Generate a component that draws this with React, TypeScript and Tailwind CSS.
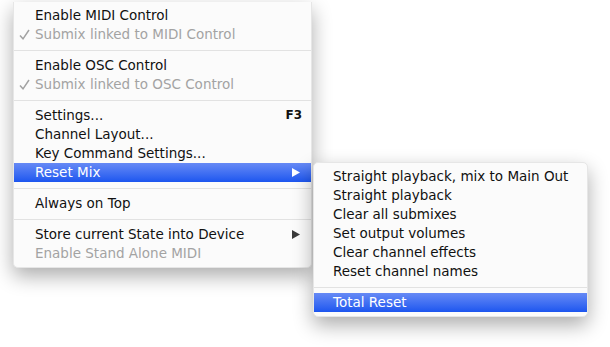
import React from 'react';

// one row of a menu: label, optional check, shortcut or submenu arrow
interface ItemProps {
    label: string;
    checked?: boolean;
    disabled?: boolean;
    active?: boolean;
    shortcut?: string;
    submenu?: boolean;
    indent?: string;
}

const Arrow = ({ white }: { white?: boolean }) => (
    <svg width="8" height="9" viewBox="0 0 8 9" className="block">
        <path d="M0 0 L8 4.5 L0 9 Z" fill={white ? '#ffffff' : '#3a3a3a'} />
    </svg>
);

const Check = () => (
    <svg width="11" height="11" viewBox="0 0 11 11" className="block">
        <path d="M1 6.5 L4 9.8 L10 1" fill="none" stroke="#a2a2a2" strokeWidth="1.5" />
    </svg>
);

const Item: React.FC<ItemProps> = ({ label, checked, disabled, active, shortcut, submenu, indent = 'w-[21px]' }) => {
    const color = active ? 'text-white' : disabled ? 'text-[#a3a3a3]' : 'text-[#111111]';
    return (
        <div
            className={`flex items-center h-[19px] ${color} ${
                active ? 'bg-gradient-to-b from-[#6689f5] to-[#1c55ef]' : ''
            }`}
        >
            <div className={`${indent} pl-[5px]`}>{checked && <Check />}</div>
            <div className="flex-1 whitespace-nowrap">{label}</div>
            {shortcut && <div className="pr-[9px] font-bold text-[12px]">{shortcut}</div>}
            {submenu && (
                <div className="pr-[11px]">
                    <Arrow white={active} />
                </div>
            )}
        </div>
    );
};

const Sep = () => (
    <div className="h-[12px] flex items-center">
        <div className="h-px w-full bg-[#e2e2e2]" />
    </div>
);

export default function App() {
    return (
        <div
            className="w-[610px] h-[347px] bg-white flex items-start text-[13.5px] leading-[19px]"
            style={{ fontFamily: '"Lucida Grande", "DejaVu Sans", sans-serif' }}
        >
            <div className="ml-[13px] mt-[2px] w-[299px] py-[4px] bg-[#fbfbfb] rounded-b-[5px] border-x border-b border-[#e6e6e6] shadow-[0_8px_20px_rgba(0,0,0,0.33)]">
                <Item label="Enable MIDI Control" />
                <Item label="Submix linked to MIDI Control" checked disabled />
                <Sep />
                <Item label="Enable OSC Control" />
                <Item label="Submix linked to OSC Control" checked disabled />
                <Sep />
                <Item label="Settings..." shortcut="F3" />
                <Item label="Channel Layout..." />
                <Item label="Key Command Settings..." />
                <Item label="Reset Mix" submenu active />
                <Sep />
                <Item label="Always on Top" />
                <Sep />
                <Item label="Store current State into Device" submenu />
                <Item label="Enable Stand Alone MIDI" disabled />
            </div>

            <div className="ml-px mt-[162px] w-[275px] py-[4px] bg-[#fbfbfb] rounded-[5px] border border-[#e6e6e6] shadow-[0_8px_20px_rgba(0,0,0,0.33)]">
                <Item label="Straight playback, mix to Main Out" indent="w-[19px]" />
                <Item label="Straight playback" indent="w-[19px]" />
                <Item label="Clear all submixes" indent="w-[19px]" />
                <Item label="Set output volumes" indent="w-[19px]" />
                <Item label="Clear channel effects" indent="w-[19px]" />
                <Item label="Reset channel names" indent="w-[19px]" />
                <Sep />
                <Item label="Total Reset" active indent="w-[19px]" />
            </div>
        </div>
    );
}
